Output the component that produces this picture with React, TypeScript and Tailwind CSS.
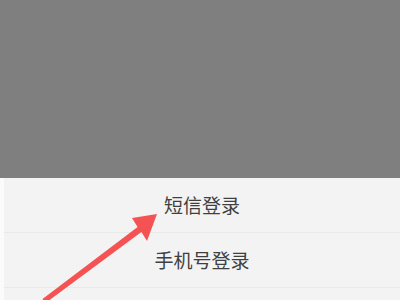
import React from 'react';

const items = ['短信登录', '手机号登录', ''];

export default function App() {
  return (
    <div
      className="relative h-[300px] w-[400px] overflow-hidden bg-[#f3f3f3]"
      style={{ fontFamily: '"Noto Sans CJK SC", "Noto Sans", sans-serif' }}
    >
      <div className="h-[178px] bg-[#7f7f7f]" />
      <div className="flex">
        <div className="w-[4px] bg-[#fbfbfb]" />
        <div className="flex flex-1 flex-col">
          {items.map((label, i) => (
            <div
              key={i}
              className="flex h-[55px] items-center justify-center border-b border-[#e9e9e9] text-[19px] text-[#404040]"
            >
              {label}
            </div>
          ))}
        </div>
      </div>

      {/* annotation arrow */}
      <svg className="pointer-events-none absolute left-0 top-0" width="400" height="300">
        <polygon
          fill="#f55353"
          points="45.5,303 141.4,232.1 147,241 157,214 132,218 137.6,226.9 42.5,299"
        />
      </svg>
    </div>
  );
}
